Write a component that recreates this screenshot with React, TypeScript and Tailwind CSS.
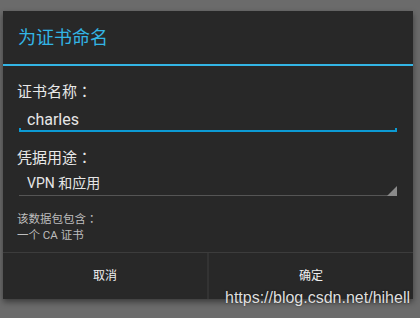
export default function App() {
  const font = { fontFamily: '"Roboto", "Noto Sans CJK SC", sans-serif' }
  const colon = { fontFamily: '"Noto Sans CJK JP", sans-serif' }
  return (
    <div className="w-[420px] h-[318px] bg-[#6b6b6b] overflow-hidden relative" style={font}>
      {/* Dialog */}
      <div className="ml-[3px] mt-[11px] w-[410px] h-[288px] bg-[#282828] flex flex-col shadow-[0_3px_6px_rgba(0,0,0,0.45)]">
        {/* Title */}
        <div className="h-[53px] flex items-center pl-[15px] text-[18px] text-[#33b5e5] shrink-0">
          为证书命名
        </div>
        <div className="h-[2px] bg-[#33b5e5] shrink-0" />

        {/* Body */}
        <div className="flex-1 flex flex-col px-[14px]">
          <div className="mt-[15px] text-[15px] leading-[20px] text-[#e8e8e8]">
            证书名称<span style={colon}>：</span>
          </div>

          {/* Edit text */}
          <div className="mt-[8px] mx-[2px] relative">
            <div className="pl-[8px] pb-[1px] text-[16px] leading-[19px] text-[#e6e6e6]">charles</div>
            <div className="h-[2px] bg-[#0c9ad3]" />
            <div className="absolute left-0 bottom-0 w-[2px] h-[4px] bg-[#0c9ad3]" />
            <div className="absolute right-0 bottom-0 w-[2px] h-[4px] bg-[#0c9ad3]" />
          </div>

          <div className="mt-[15px] text-[15px] leading-[20px] text-[#e8e8e8]">
            凭据用途<span style={colon}>：</span>
          </div>

          {/* Spinner */}
          <div className="mt-[6px] mx-[2px] relative">
            <div className="pl-[8px] text-[14px] leading-[18px] text-[#e6e6e6]">VPN 和应用</div>
            <div className="mt-[3px] h-px bg-[#555555]" />
            <svg className="absolute right-0 bottom-0" width="10" height="10" viewBox="0 0 10 10">
              <polygon points="10,0 10,10 0,10" fill="#8a8a8a" />
            </svg>
          </div>

          <div className="mt-[14px] text-[11.5px] leading-[16px] text-[#bdbdbd]">
            <div>
              该数据包包含<span style={colon}>：</span>
            </div>
            <div>一个 CA 证书</div>
          </div>
        </div>

        {/* Buttons */}
        <div className="h-px bg-[#3c3c3c] shrink-0" />
        <div className="h-[46px] flex shrink-0 text-[12px] text-[#f0f0f0]">
          <div className="flex-1 flex items-center justify-center">取消</div>
          <div className="w-[2px] bg-[#333333]" />
          <div className="flex-1 flex items-center justify-center">确定</div>
        </div>
      </div>

      {/* Watermark */}
      <div
        className="absolute right-[10px] top-[288px] text-[16px] leading-[20px] text-[#dedede] [text-shadow:0_0_2px_rgba(0,0,0,0.5)]"
        style={{ fontFamily: '"Liberation Sans", Arial, sans-serif' }}
      >
        https://blog.csdn.net/hihell
      </div>
    </div>
  )
}
